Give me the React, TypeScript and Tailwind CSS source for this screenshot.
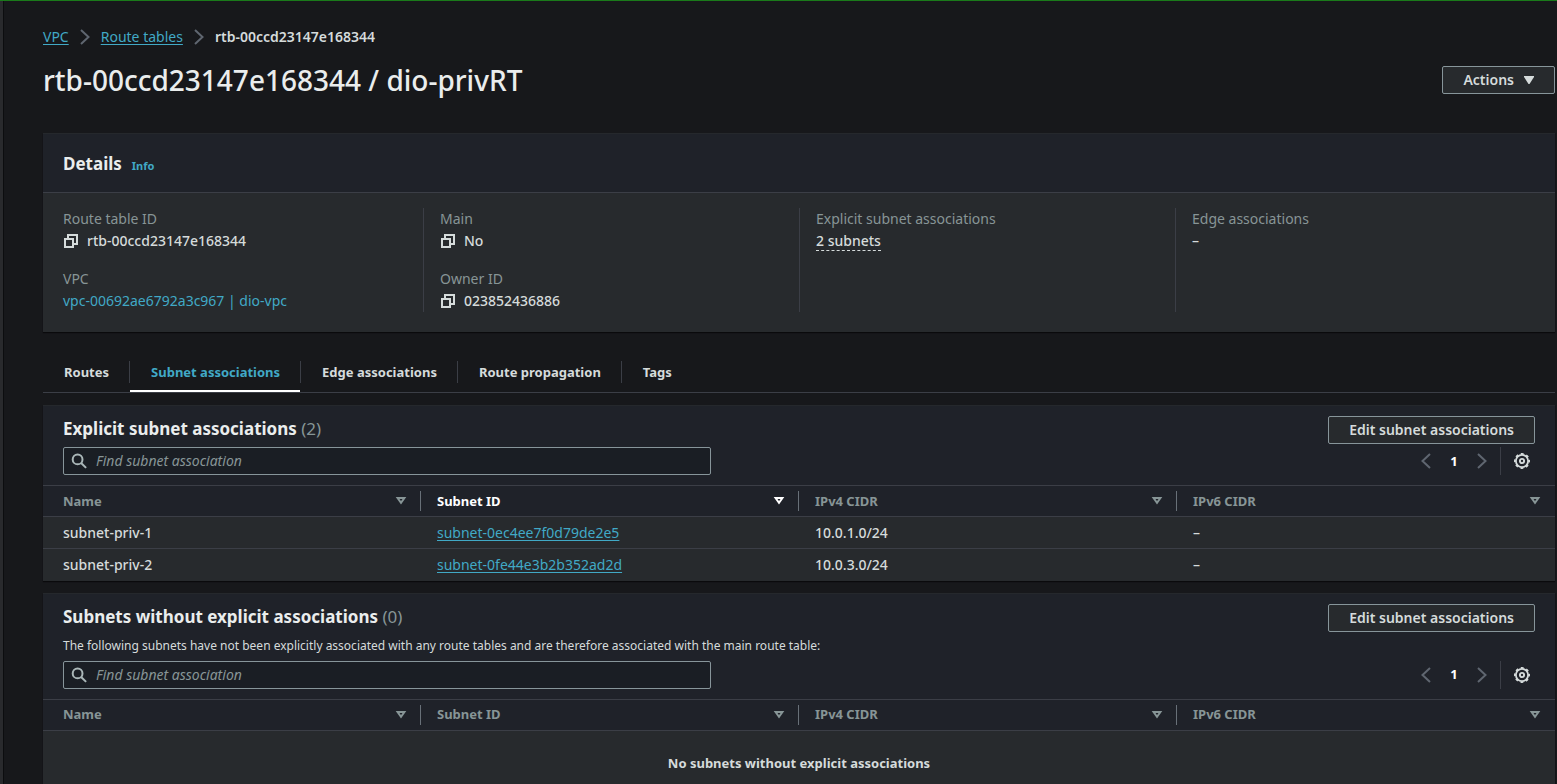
import type { ReactNode } from "react";

type SubnetRow = { name: string; id: string; v4: string; v6: string };

const COLUMNS = ["Name", "Subnet ID", "IPv4 CIDR", "IPv6 CIDR"];

const ASSOCIATED: SubnetRow[] = [
  { name: "subnet-priv-1", id: "subnet-0ec4ee7f0d79de2e5", v4: "10.0.1.0/24", v6: "–" },
  { name: "subnet-priv-2", id: "subnet-0fe44e3b2b352ad2d", v4: "10.0.3.0/24", v6: "–" },
];

function Chevron({ left = false, className }: { left?: boolean; className: string }) {
  return (
    <svg viewBox="0 0 16 16" className={className} fill="none" stroke="currentColor" strokeWidth="2" aria-hidden="true">
      <path d={left ? "M12 1 4.5 8 12 15" : "M4 1 11.5 8 4 15"} />
    </svg>
  );
}

function CopyIcon() {
  return (
    <svg viewBox="0 0 16 16" className="size-4" fill="none" stroke="currentColor" strokeWidth="2" aria-hidden="true">
      <path d="M2 6h8v8H2z" />
      <path d="M5 6V2h9v9h-4" />
    </svg>
  );
}

function SearchIcon() {
  return (
    <svg viewBox="0 0 16 16" className="size-4" fill="none" stroke="currentColor" strokeWidth="2" aria-hidden="true">
      <circle cx="6.6" cy="6.4" r="4.9" />
      <path d="m10.1 10 5 4.9" />
    </svg>
  );
}

function SortIcon() {
  return (
    <svg viewBox="0 0 12 12" className="size-3 shrink-0" fill="none" stroke="currentColor" strokeWidth="2" aria-hidden="true">
      <path d="M2.6 3h6.8L6 7.8z" />
    </svg>
  );
}

function GearIcon() {
  return (
    <svg viewBox="0 0 16 16" className="size-4" fill="none" stroke="currentColor" aria-hidden="true">
      <circle cx="8" cy="8" r="6.1" strokeWidth="1.8" />
      <circle cx="8" cy="8" r="7.1" strokeWidth="1.8" strokeDasharray="2.8 2.776" strokeDashoffset="1.4" />
      <circle cx="8" cy="8" r="2.1" strokeWidth="1.9" />
    </svg>
  );
}

function Button({ children }: { children: ReactNode }) {
  return (
    <button
      type="button"
      className="flex h-7 shrink-0 items-center rounded-xs border border-[#87959a] bg-[#272a2d] px-5 text-sm font-semibold text-[#d5dbdb]"
    >
      {children}
    </button>
  );
}

function Detail({ label, children }: { label: string; children: ReactNode }) {
  return (
    <div className="leading-[22px]">
      <dt className="text-[#879596]">{label}</dt>
      <dd className="flex items-center gap-2 font-medium">{children}</dd>
    </div>
  );
}

function CopyValue({ value }: { value: string }) {
  return (
    <>
      <button type="button" aria-label={`Copy ${value}`}>
        <CopyIcon />
      </button>
      {value}
    </>
  );
}

function Breadcrumbs() {
  return (
    <nav aria-label="Breadcrumbs" className="flex items-center gap-2 leading-[22px]">
      <a href="#vpc" className="text-[#41a9c6] underline underline-offset-2">VPC</a>
      <Chevron className="size-4 text-[#5f6670]" />
      <a href="#route-tables" className="text-[#41a9c6] underline underline-offset-2">Route tables</a>
      <Chevron className="size-4 text-[#5f6670]" />
      <span className="font-semibold">rtb-00ccd23147e168344</span>
    </nav>
  );
}

function Details() {
  return (
    <section className="border-t border-[#25282c] bg-[#272a2d] shadow-[0_1px_1px_#0a0a0c]">
      <header className="flex h-[59px] items-center gap-[10px] border-b border-[#3b3e46] bg-[#1f2229] px-5 pt-0.5">
        <h2 className="text-[17px] font-bold text-[#eaeded]">Details</h2>
        <a href="#info" className="pt-1 text-[11px] font-bold text-[#41a9c6]">Info</a>
      </header>
      <dl className="grid grid-cols-4 px-1 pt-[15px] pb-5">
        <div className="flex flex-col gap-4 pl-4">
          <Detail label="Route table ID"><CopyValue value="rtb-00ccd23147e168344" /></Detail>
          <Detail label="VPC">
            <a href="#vpc-detail" className="font-normal text-[#41a9c6]">vpc-00692ae6792a3c967 | dio-vpc</a>
          </Detail>
        </div>
        <div className="flex flex-col gap-4 border-l border-[#3b3e46] pl-4">
          <Detail label="Main"><CopyValue value="No" /></Detail>
          <Detail label="Owner ID"><CopyValue value="023852436886" /></Detail>
        </div>
        <div className="border-l border-[#3b3e46] pl-4">
          <Detail label="Explicit subnet associations">
            <button type="button" className="mt-0.5 border-b border-dashed border-[#d5dbdb] leading-[18px]">2 subnets</button>
          </Detail>
        </div>
        <div className="border-l border-[#3b3e46] pl-4">
          <Detail label="Edge associations">–</Detail>
        </div>
      </dl>
    </section>
  );
}

function Tabs() {
  const tabs = ["Routes", "Subnet associations", "Edge associations", "Route propagation", "Tags"];
  return (
    <div role="tablist" className="flex h-[41px] border-b border-[#3b3e46]">
      {tabs.map((tab, i) => (
        <div key={tab} className="flex">
          {i > 0 && <span className="mt-[9px] h-[22px] w-px bg-[#3b3e46]" />}
          <button
            type="button"
            role="tab"
            aria-selected={i === 1}
            className={
              i === 1
                ? "border-b-2 border-white pt-0.5 pr-5 pl-[21px] text-[13px] font-bold text-[#41a9c6]"
                : "border-b-2 border-transparent pt-0.5 pr-5 pl-[21px] text-[13px] font-bold text-[#d5dbdb]"
            }
          >
            {tab}
          </button>
        </div>
      ))}
    </div>
  );
}

function SubnetCard({
  id,
  title,
  count,
  description,
  sorted,
  rows,
  empty,
}: {
  id: string;
  title: string;
  count: number;
  description?: string;
  sorted?: string;
  rows: SubnetRow[];
  empty?: string;
}) {
  return (
    <section className="border-t border-[#25282c] bg-[#1f2229] shadow-[0_1px_1px_#0a0a0c]">
      <div className="px-5 pt-[10px] pb-[10px]">
        <div className="flex h-[31px] items-start justify-between">
          <h2 className="text-[17px] leading-[26px] font-bold text-[#eaeded]">
            {title} <span className="font-normal text-[#879596]">({count})</span>
          </h2>
          <Button>Edit subnet associations</Button>
        </div>
        {description && <p className="h-[26px] pt-0.5 text-xs leading-[18px]">{description}</p>}
        <div className="flex items-center justify-between">
          <label
            htmlFor={id}
            className="flex h-7 w-[44%] items-center gap-[9px] rounded-xs border border-[#87959a] bg-[#1a1e24] px-[7px] text-[#aab7b8]"
          >
            <SearchIcon />
            <input
              id={id}
              type="search"
              aria-label="Find subnet association"
              placeholder="Find subnet association"
              className="min-w-0 flex-1 bg-transparent text-sm text-[#d5dbdb] outline-none placeholder:text-[#879596] placeholder:italic"
            />
          </label>
          <div className="flex h-7 items-center pr-[5px]">
            <button type="button" aria-label="Previous page" className="text-[#5f6670]"><Chevron left className="size-4" /></button>
            <button type="button" className="w-10 text-center text-[13px] font-bold text-white">1</button>
            <button type="button" aria-label="Next page" className="text-[#5f6670]"><Chevron className="size-4" /></button>
            <span className="ml-[10px] h-7 w-px bg-[#3b3e46]" />
            <button type="button" aria-label="Preferences" className="ml-[13px]"><GearIcon /></button>
          </div>
        </div>
      </div>
      <table className="w-full table-fixed border-collapse text-left">
        <thead>
          <tr className="h-[31px] border-y border-[#3b3e46]">
            {COLUMNS.map((col, i) => (
              <th key={col} scope="col" className={col === sorted ? "p-0 text-white" : "p-0 text-[#879596]"}>
                <div
                  className={
                    i < COLUMNS.length - 1
                      ? "flex h-5 items-center justify-between border-r border-[#687078] pr-[13px] pl-4"
                      : "flex h-5 items-center justify-between pr-[14px] pl-4"
                  }
                >
                  <span className={i === 0 ? "pl-1 text-[13px] font-bold" : "text-[13px] font-bold"}>{col}</span>
                  <SortIcon />
                </div>
              </th>
            ))}
          </tr>
        </thead>
        <tbody className="bg-[#272a2d]">
          {rows.map((row) => (
            <tr key={row.id} className="h-8 border-b border-[#3b3e46] font-medium last:border-b-0">
              <td className="py-0 pr-4 pl-5">{row.name}</td>
              <td className="px-4 py-0">
                <a href={`#${row.id}`} className="font-normal text-[#41a9c6] underline underline-offset-2">{row.id}</a>
              </td>
              <td className="px-4 py-0">{row.v4}</td>
              <td className="px-4 py-0">{row.v6}</td>
            </tr>
          ))}
          {empty && (
            <tr className="h-[67px]">
              <td colSpan={4} className="text-center text-[13px] font-bold">{empty}</td>
            </tr>
          )}
        </tbody>
      </table>
    </section>
  );
}

export default function App() {
  return (
    <div className="flex h-screen flex-col overflow-hidden border-t border-[#1a7a1a] bg-[#17181b] font-['Noto_Sans',sans-serif] text-sm text-[#d5dbdb]">
      <div className="flex min-h-0 flex-1">
        <div className="w-[4px] shrink-0 border-r border-[#0c0d0f] bg-[#292a2d]" />
        <main className="min-w-0 flex-1 pt-[25px] pr-0.5 pl-[39px]">
          <Breadcrumbs />
          <div className="mt-[14px] mb-[35px] flex h-9 items-center justify-between">
            <h1 className="text-[28px] leading-[34px] font-medium text-[#eaeded]">rtb-00ccd23147e168344 / dio-privRT</h1>
            <Button>
              Actions
              <svg viewBox="0 0 10 8" className="ml-[10px] h-2 w-[10px]" fill="currentColor" aria-hidden="true">
                <path d="M0 0h10v1L5.500 8h-1L0 1z" />
              </svg>
            </Button>
          </div>
          <Details />
          <div className="mt-5 mb-3"><Tabs /></div>
          <div className="flex flex-col gap-3">
            <SubnetCard id="find-explicit" title="Explicit subnet associations" count={2} sorted="Subnet ID" rows={ASSOCIATED} />
            <SubnetCard
              id="find-implicit"
              title="Subnets without explicit associations"
              count={0}
              description="The following subnets have not been explicitly associated with any route tables and are therefore associated with the main route table:"
              rows={[]}
              empty="No subnets without explicit associations"
            />
          </div>
        </main>
      </div>
    </div>
  );
}
